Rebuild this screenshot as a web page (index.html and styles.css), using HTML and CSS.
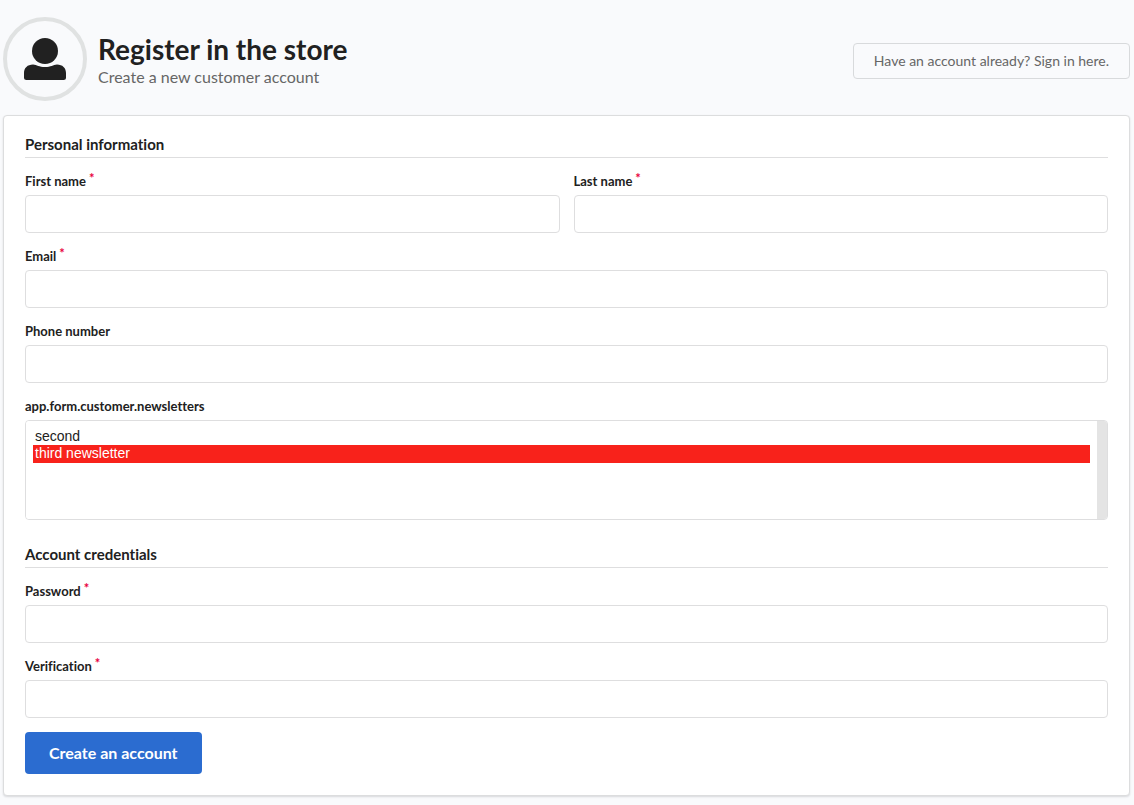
FILE: index.html
```html
<!DOCTYPE html>
<html lang="en">
<head>
<meta charset="utf-8">
<title>Register in the store</title>
<meta name="viewport" content="width=device-width, initial-scale=1">
<link rel="stylesheet" href="styles.css">
</head>
<body>
<main class="page">
  <header class="page-header">
    <div class="avatar">
      <svg class="avatar-icon" viewBox="0 0 42 42" aria-hidden="true">
        <circle cx="21" cy="13" r="13"/>
        <path d="M9 26.500C13 27 15 29 21 29S29 27 33 26.500C38.500 26.500 42 30 42 35V39.500Q42 42 39.500 42H2.500Q0 42 0 39.500V35C0 30 3.500 26.500 9 26.500Z"/>
      </svg>
    </div>
    <div class="headline">
      <h1 class="title">Register in the store</h1>
      <p class="subtitle">Create a new customer account</p>
    </div>
    <a class="signin" href="#">Have an account already? Sign in here.</a>
  </header>

  <form class="card">
    <h2 class="section-title">Personal information</h2>
    <div class="field-row">
      <div class="field">
        <label class="label required" for="first-name">First name</label>
        <input class="control" id="first-name" type="text" required>
      </div>
      <div class="field">
        <label class="label required" for="last-name">Last name</label>
        <input class="control" id="last-name" type="text" required>
      </div>
    </div>
    <div class="field">
      <label class="label required" for="email">Email</label>
      <input class="control" id="email" type="email" required>
    </div>
    <div class="field">
      <label class="label" for="phone">Phone number</label>
      <input class="control" id="phone" type="tel">
    </div>
    <div class="field">
      <label class="label" for="newsletters">app.form.customer.newsletters</label>
      <div class="list-box">
        <select class="list" id="newsletters" multiple>
          <option class="option">second</option>
          <option class="option" selected>third newsletter</option>
        </select>
        <div class="list-track"></div>
      </div>
    </div>
    <h2 class="section-title section-title-next">Account credentials</h2>
    <div class="field">
      <label class="label required" for="password">Password</label>
      <input class="control" id="password" type="password" required>
    </div>
    <div class="field">
      <label class="label required" for="verification">Verification</label>
      <input class="control" id="verification" type="password" required>
    </div>
    <button class="submit" type="submit">Create an account</button>
  </form>
</main>
</body>
</html>
```
FILE: styles.css
```css
* {
  box-sizing: border-box;
}

body {
  margin: 0;
  background: #f9fafc;
  color: #212121;
  font-family: Lato, "Liberation Sans", sans-serif;
  font-size: 14px;
  font-variant-ligatures: none;
}

.page {
  padding: 17px 4px 8px 3px;
}

.page-header {
  display: flex;
  align-items: center;
  margin-bottom: 14px;
}

.avatar {
  display: flex;
  flex: none;
  align-items: center;
  justify-content: center;
  width: 84px;
  height: 84px;
  border: 4px solid #e0e2e2;
  border-radius: 50%;
}

.avatar-icon {
  width: 42px;
  height: 42px;
  fill: #212121;
}

.headline {
  flex: 1;
  padding: 0 0 2px 11px;
}

.title {
  margin: 0;
  font-size: 28px;
  line-height: 36px;
}

.subtitle {
  margin: 0;
  color: #666;
  font-size: 16px;
  line-height: 19px;
}

.signin {
  margin-top: 4px;
  padding: 10px 20px;
  border: 1px solid #d8dadc;
  border-radius: 4px;
  color: #666;
  line-height: 14px;
  text-decoration: none;
}

.card {
  padding: 21px;
  background: #fff;
  border: 1px solid #dcddde;
  border-radius: 4px;
  box-shadow: 0 1px 2px rgba(34, 36, 38, 0.15);
}

.section-title {
  margin: 0 0 14px;
  padding-bottom: 5px;
  border-bottom: 1px solid #dededf;
  font-size: 15px;
  line-height: 15px;
}

.section-title-next {
  margin-top: 27px;
}

.field-row {
  display: grid;
  grid-template-columns: 1fr 1fr;
  gap: 14px;
}

.field {
  display: flex;
  flex-direction: column;
  margin-bottom: 14px;
}

.label {
  margin-bottom: 4px;
  font-size: 13px;
  font-weight: 700;
  line-height: 19px;
}

.required::after {
  content: "*";
  display: inline-block;
  margin: -3px 0 0 3px;
  color: #e8003c;
  vertical-align: top;
}

.control {
  width: 100%;
  height: 38px;
  padding: 9px 14px;
  border: 1px solid #dededf;
  border-radius: 4px;
  background: #fff;
  color: inherit;
  font: inherit;
}

.list-box {
  display: flex;
  height: 100px;
  overflow: hidden;
  border: 1px solid #dededf;
  border-radius: 4px;
  background: #fff;
}

.list {
  flex: 1;
  padding: 7px;
  border: 0;
  background: #fff;
  color: #212121;
  font: 14px "Liberation Sans", Arial, sans-serif;
}

.list-track {
  width: 10px;
  background: #e4e4e4;
}

.option:checked {
  padding-bottom: 2px;
  background: #f8221b linear-gradient(#f8221b, #f8221b);
  color: #fff;
}

.submit {
  display: block;
  padding: 12px 24px;
  border: 0;
  border-radius: 4px;
  background: #2b6cd0;
  color: #fff;
  font: 700 16px/18px Lato, "Liberation Sans", sans-serif;
}
```
